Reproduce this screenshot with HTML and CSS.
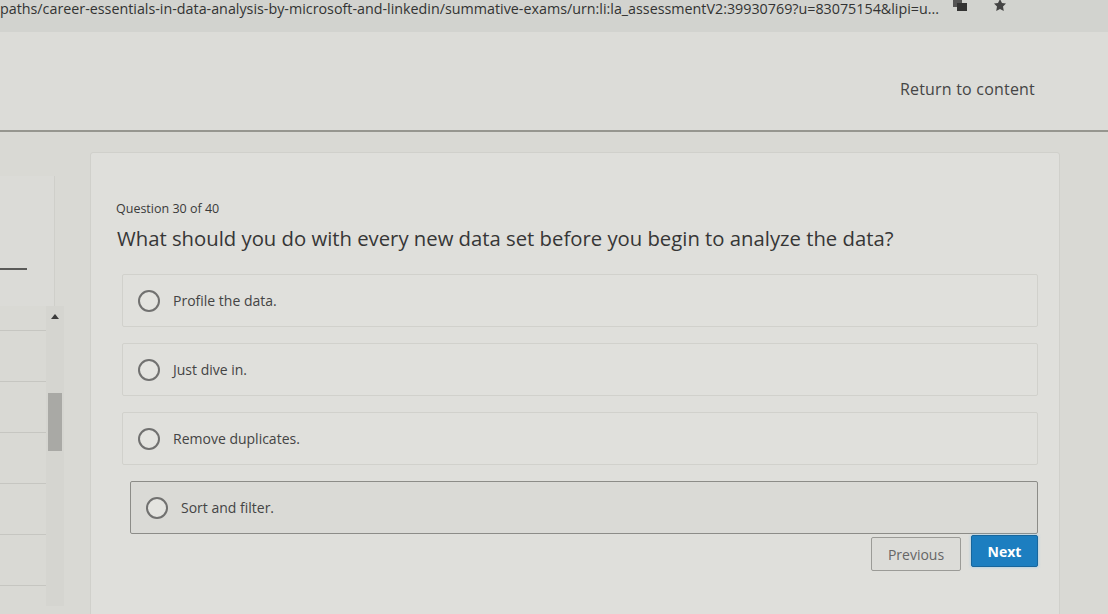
FILE: index.html
```html
<!DOCTYPE html>
<html lang="en">
<head>
<meta charset="utf-8">
<title>Summative exam</title>
<link rel="stylesheet" href="styles.css">
</head>
<body>
<div class="urlbar">
  <span class="url">paths/career-essentials-in-data-analysis-by-microsoft-and-linkedin/summative-exams/urn:li:la_assessmentV2:39930769?u=83075154&amp;lipi=u...</span>
  <span class="url-icons">
    <svg width="16" height="14" viewBox="0 0 16 14"><rect x="1" y="1" width="9" height="8" fill="#555"/><rect x="5" y="5" width="10" height="8" fill="#333"/></svg>
    <svg width="16" height="14" viewBox="0 0 16 14"><path d="M8 1l2 4 4 .5-3 3 .8 4.5L8 11l-3.8 2 .8-4.5-3-3 4-.5z" fill="#444"/></svg>
  </span>
</div>
<header class="topbar">
  <a class="return" href="#">Return to content</a>
</header>
<div class="page">
  <aside class="sidebar">
    <div class="side-panel"><div class="side-rule"></div></div>
    <div class="side-list">
      <div class="rows">
        <div class="row"></div><div class="row"></div><div class="row"></div>
        <div class="row"></div><div class="row"></div><div class="row"></div>
      </div>
      <div class="scroll">
        <div class="scroll-up"></div>
        <div class="thumb"></div>
      </div>
    </div>
  </aside>
  <main class="card">
    <div class="q-count">Question 30 of 40</div>
    <h1 class="q-text">What should you do with every new data set before you begin to analyze the data?</h1>
    <div class="options">
      <label class="option"><span class="radio"></span><span class="opt-text">Profile the data.</span></label>
      <label class="option"><span class="radio"></span><span class="opt-text">Just dive in.</span></label>
      <label class="option"><span class="radio"></span><span class="opt-text">Remove duplicates.</span></label>
      <label class="option hover"><span class="radio"></span><span class="opt-text">Sort and filter.</span></label>
    </div>
    <div class="actions">
      <button class="btn prev">Previous</button>
      <button class="btn next">Next</button>
    </div>
  </main>
</div>
</body>
</html>
```
FILE: styles.css
```css
* { box-sizing: border-box; }
html, body { margin: 0; padding: 0; }
body {
  width: 1108px;
  height: 614px;
  overflow: hidden;
  background: #d9d9d4;
  font-family: "Open Sans", "Noto Sans", sans-serif;
  color: #3c3c3c;
}
.urlbar {
  height: 32px;
  background: #d2d3cf;
  display: flex;
  align-items: flex-start;
  overflow: hidden;
  white-space: nowrap;
}
.url {
  font-size: 14.3px;
  line-height: 18px;
  color: #333;
  overflow: hidden;
  text-overflow: ellipsis;
  flex: 0 0 944px;
}
.url-icons {
  display: flex;
  gap: 24px;
  padding-left: 8px;
  margin-top: -2px;
}
.topbar {
  height: 100px;
  background: #dcdcd8;
  border-bottom: 2px solid #96968f;
  display: flex;
  justify-content: flex-end;
  padding: 47px 73px 0 0;
}
.return {
  font-size: 16px;
  line-height: 20px;
  color: #454545;
  text-decoration: none;
  letter-spacing: 0.2px;
}
.page {
  display: flex;
  align-items: flex-start;
}
.sidebar {
  width: 90px;
  flex: 0 0 90px;
  margin-top: 44px;
}
.side-panel {
  width: 55px;
  height: 130px;
  background: #dbdbd7;
  border-right: 1px solid #cfcfca;
  padding-top: 92px;
}
.side-rule {
  width: 27px;
  height: 2px;
  background: #5a5a58;
}
.side-list {
  display: flex;
}
.rows {
  width: 46px;
  padding-top: 24px;
}
.row {
  height: 51px;
  border-top: 1px solid #c6c6c1;
}
.scroll {
  width: 18px;
  height: 300px;
  background: #d5d5d0;
  padding: 8px 2px 0 2px;
}
.scroll-up {
  width: 0;
  height: 0;
  margin: 0 auto;
  border-left: 4px solid transparent;
  border-right: 4px solid transparent;
  border-bottom: 5px solid #3c3c3c;
}
.thumb {
  margin-top: 74px;
  width: 14px;
  height: 58px;
  background: #a9a9a5;
}
.card {
  width: 970px;
  margin-top: 20px;
  background: #dfdfdb;
  border: 1px solid #d0d0cb;
  border-radius: 3px;
  padding: 48px 21px 40px 25px;
  min-height: 480px;
}
.q-count {
  font-size: 12.5px;
  line-height: 16px;
  color: #3a3a3a;
}
.q-text {
  margin: 8px 0 0 1px;
  font-size: 20.3px;
  line-height: 26px;
  font-weight: 400;
  color: #363636;
}
.options {
  margin: 23px 0 0 6px;
  display: flex;
  flex-direction: column;
  gap: 16px;
}
.option {
  height: 53px;
  display: flex;
  align-items: center;
  padding-left: 15px;
  background: #e0e0dc;
  border: 1px solid #d1d1cc;
  border-radius: 2px;
}
.option.hover {
  background: #dadad6;
  border: 1px solid #8c8c88;
  margin-left: 8px;
}
.radio {
  width: 22px;
  height: 22px;
  border: 2px solid #717170;
  border-radius: 50%;
  background: #e4e4e0;
  flex: 0 0 22px;
}
.opt-text {
  margin-left: 13px;
  font-size: 14px;
  color: #444;
}
.actions {
  margin-top: 3px;
  display: flex;
  justify-content: flex-end;
  gap: 10px;
}
.btn {
  font-family: "Open Sans", "Noto Sans", sans-serif;
  font-size: 14px;
  height: 34px;
  border-radius: 2px;
  cursor: pointer;
}
.prev {
  width: 90px;
  background: #dcdcd8;
  border: 1px solid #9b9b97;
  color: #666;
}
.next {
  width: 67px;
  height: 32px;
  margin-top: -2px;
  background: #1c7ec0;
  border: 1px solid #17669c;
  color: #fff;
  font-weight: 700;
  box-shadow: 0 0 3px rgba(120, 190, 240, 0.7);
}
```
